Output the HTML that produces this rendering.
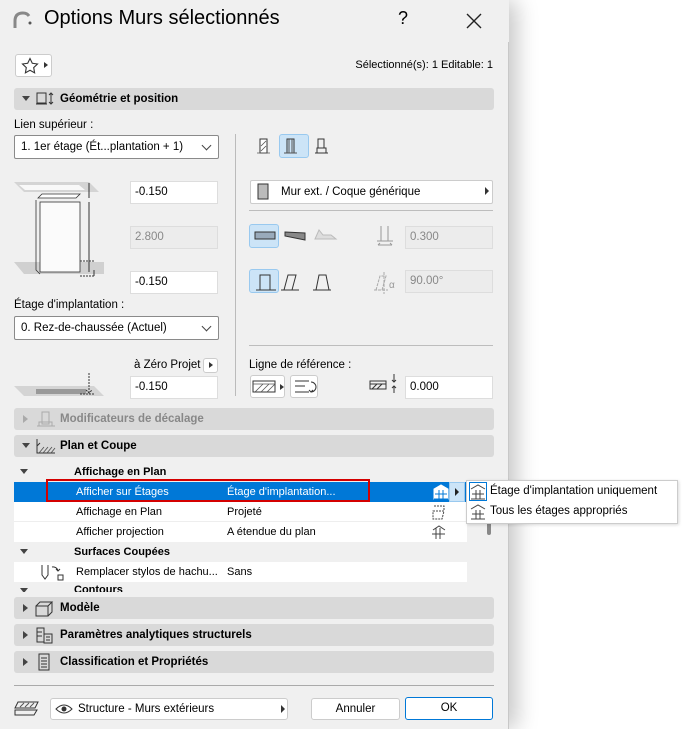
<!DOCTYPE html><html><head><meta charset="utf-8"><style>
*{box-sizing:border-box}body{margin:0;width:685px;height:729px;background:#fff;font-family:"Liberation Sans",sans-serif;font-size:11.5px;color:#000;position:relative;overflow:hidden}
.a{position:absolute}
.dlg{left:0;top:0;width:509px;height:729px;background:#f0f0f0;border-right:1px solid #c8c8c8;border-radius:0 8px 0 0;box-shadow:8px 0 22px rgba(0,0,0,.22)}
.title{left:0;top:0;width:509px;height:42px;background:#f0f0f0}
.hdr{left:14px;width:480px;height:22px;background:#d9d9d9;border-radius:3px;font-weight:bold;font-size:11.5px;line-height:22px}
.hdr .t{position:absolute;left:46px}
.tri{position:absolute;left:8px;top:8px;width:0;height:0;border-left:4px solid transparent;border-right:4px solid transparent;border-top:5px solid #444}
.trr{position:absolute;left:9px;top:7px;width:0;height:0;border-top:4px solid transparent;border-bottom:4px solid transparent;border-left:5px solid #444}
.inp{background:#fff;border:1px solid #ddd;height:23px;line-height:21px;padding-left:4px;font-size:11.5px}
.dis{background:#ececec;color:#888;border:1px solid #ddd}
.dd{background:#fff;border:1px solid #8a8a8a;height:24px;line-height:22px;padding-left:6px;border-radius:2px}
.chev{position:absolute;right:8px;top:6px;width:7px;height:7px;border-right:1.3px solid #444;border-bottom:1.3px solid #444;transform:rotate(45deg)}
.btn{background:#fff;border:1px solid #ccc;border-radius:3px}
.sel{background:#cce4f7;border:1px solid #99c9ef;border-radius:3px}
.row{left:14px;width:462px;height:20px;line-height:20px;font-size:11px}
.line{height:1px;background:#bdbdbd}
</style></head><body>
<div class="a dlg"></div>
<div class="a title"></div>
<svg class="a" style="left:12px;top:10px" width="20" height="20"><path d="M3 18 V11 Q3 3 11 3 Q15 3 17 6" fill="none" stroke="#888" stroke-width="3"/><circle cx="18" cy="13" r="1.5" fill="#555"/></svg>
<div class="a" style="left:44px;top:7px;font-size:20px">Options Murs sélectionnés</div>
<div class="a" style="left:398px;top:8px;font-size:18px">?</div>
<svg class="a" style="left:466px;top:13px" width="16" height="16"><path d="M1 1L15 15M15 1L1 15" stroke="#222" stroke-width="1.4"/></svg>
<div class="a btn" style="left:15px;top:54px;width:37px;height:23px"></div>
<svg class="a" style="left:21px;top:57px" width="18" height="17"><path d="M9 1.5l2.3 4.8 5.2.7-3.8 3.6.9 5.2L9 13.3 4.4 15.8l.9-5.2L1.5 7l5.2-.7z" fill="none" stroke="#333" stroke-width="1.1"/></svg>
<div class="a" style="left:44px;top:62px;border-top:3.5px solid transparent;border-bottom:3.5px solid transparent;border-left:4px solid #333"></div>
<div class="a" style="right:192px;top:59px;font-size:11px">Sélectionné(s): 1 Editable: 1</div>
<div class="a hdr" style="top:88px"><div class="tri"></div><svg class="a" style="left:21px;top:3px" width="20" height="16"><rect x="2" y="2" width="9" height="10" fill="none" stroke="#333"/><path d="M1 13h11M16 2v11M14 4l2-2 2 2M14 11l2 2 2-2" fill="none" stroke="#333"/></svg><span class="t">Géométrie et position</span></div>
<div class="a" style="left:14px;top:119px">Lien supérieur :</div>
<div class="a dd" style="left:14px;top:135px;width:205px">1. 1er étage (Ét...plantation + 1)<div class="chev"></div></div>
<div class="a" style="left:235px;top:134px;width:1px;height:262px;background:#bbb"></div>
<div class="a sel" style="left:279px;top:134px;width:30px;height:24px"></div>
<svg class="a" style="left:255px;top:137px;" width="80" height="20"><rect x="5" y="2" width="7" height="14" fill="#fff" stroke="#333"/><path d="M2 16h13M6 14l5-5M6 9l5-5" stroke="#555" stroke-width=".8"/><rect x="32" y="2" width="7" height="14" fill="none" stroke="#333"/><path d="M29 16h13M34 2v14M37 2v14" stroke="#555"/><rect x="63" y="2" width="6" height="9" fill="none" stroke="#333"/><path d="M60 16h13M62 16v-5h9v5" fill="none" stroke="#333"/></svg>
<svg class="a" style="left:14px;top:178px" width="90" height="120"><path d="M0 4h75l10 10H10z" fill="#d4d4d4"/><path d="M5 7h60l6 5H11z" fill="#f8f8f8"/><path d="M0 84h90l12 12H10z" fill="#d0d0d0"/><path d="M24 20l4-4h38l-4 4z" fill="#fff" stroke="#333" stroke-width=".8"/><rect x="26" y="24" width="40" height="70" fill="#fbfbfb" stroke="#333" stroke-width=".8"/><path d="M22 22v70l4 4" fill="none" stroke="#333" stroke-width=".8"/><path d="M75 5v15M75 24v70M80 92v6" stroke="#333"/><path d="M66 83h14M66 98h14" stroke="#333" stroke-dasharray="2 1"/></svg>
<div class="a inp" style="left:130px;top:181px;width:88px">-0.150</div>
<div class="a inp dis" style="left:130px;top:226px;width:88px">2.800</div>
<div class="a inp" style="left:130px;top:271px;width:88px">-0.150</div>
<div class="a dd" style="left:250px;top:180px;width:243px;border-color:#ccc;padding-left:30px">Mur ext. / Coque générique</div>
<svg class="a" style="left:257px;top:183px" width="12" height="17"><rect x="1" y="1" width="10" height="15" fill="#bbb" stroke="#333"/></svg>
<div class="a" style="left:485px;top:187px;border-top:4px solid transparent;border-bottom:4px solid transparent;border-left:4px solid #333"></div>
<div class="a line" style="left:249px;top:210px;width:244px"></div>
<div class="a sel" style="left:249px;top:224px;width:30px;height:24px"></div>
<svg class="a" style="left:252px;top:226px" width="90" height="20"><rect x="3" y="6" width="20" height="7" fill="#9ab" stroke="#333"/><path d="M33 6l20 1v7l-20-4z" fill="#888" stroke="#333"/><path d="M63 13h21l-5-4h-8l-4-5z" fill="#ddd" stroke="#bbb"/></svg>
<svg class="a" style="left:375px;top:225px" width="20" height="24"><path d="M6 1v15M13 1v15M2 16h16M3 20h14M3 20l2-2M17 20l-2-2" fill="none" stroke="#999"/></svg>
<div class="a inp dis" style="left:405px;top:226px;width:88px">0.300</div>
<div class="a sel" style="left:249px;top:269px;width:30px;height:24px"></div>
<svg class="a" style="left:252px;top:271px" width="90" height="20"><path d="M4 19h20M8 19V4h10v15M29 19h18M32 19l4-15h8l-4 15M61 19h18M64 19l3-15h7l3 15" fill="none" stroke="#333"/></svg>
<svg class="a" style="left:372px;top:270px" width="30" height="24"><path d="M4 20l4-14h6l-4 14zM12 2v22M2 20h14" fill="none" stroke="#aaa" stroke-dasharray="3 1"/><text x="17" y="18" font-size="10" fill="#999" font-family="Liberation Sans">α</text></svg>
<div class="a inp dis" style="left:405px;top:270px;width:88px">90.00°</div>
<div class="a" style="left:14px;top:299px">Étage d'implantation :</div>
<div class="a dd" style="left:14px;top:316px;width:205px">0. Rez-de-chaussée (Actuel)<div class="chev"></div></div>
<div class="a line" style="left:249px;top:345px;width:244px"></div>
<div class="a" style="left:134px;top:359px">à Zéro Projet</div>
<div class="a btn" style="left:203px;top:358px;width:15px;height:15px"></div>
<div class="a" style="left:209px;top:362px;border-top:3.5px solid transparent;border-bottom:3.5px solid transparent;border-left:4px solid #333"></div>
<svg class="a" style="left:14px;top:372px" width="90" height="28"><path d="M0 14h80l10 10H10z" fill="#d4d4d4"/><rect x="22" y="17" width="50" height="5" fill="#999"/><path d="M75 1v20M72 18l3 3 3-3M66 22h14" stroke="#333" fill="none" stroke-dasharray="2 1"/></svg>
<div class="a inp" style="left:130px;top:376px;width:88px">-0.150</div>
<div class="a" style="left:249px;top:359px">Ligne de référence :</div>
<div class="a btn" style="left:250px;top:375px;width:35px;height:23px"></div>
<svg class="a" style="left:252px;top:378px" width="70" height="18"><rect x="1" y="3" width="22" height="11" fill="#fff" stroke="#333"/><path d="M1 6h22M3 14l8-8M9 14l8-8M15 14l8-8" stroke="#555" stroke-width=".8"/><path d="M28 6l4 3-4 3z" fill="#333"/></svg>
<div class="a btn" style="left:290px;top:375px;width:28px;height:23px"></div>
<svg class="a" style="left:293px;top:378px" width="24" height="18"><path d="M2 3h14M2 14h14M2 8h10" stroke="#333"/><path d="M18 4a5 5 0 0 1 0 10M16 12l2 2 2-2" fill="none" stroke="#333"/></svg>
<svg class="a" style="left:368px;top:372px" width="34" height="24"><rect x="2" y="9" width="16" height="8" fill="none" stroke="#333"/><path d="M2 12h16M4 17l5-5M9 17l5-5M26 2v8M26 14v7M24 8l2 2 2-2M24 16l2-2 2 2" stroke="#333" fill="none"/></svg>
<div class="a inp" style="left:405px;top:376px;width:88px">0.000</div>
<div class="a hdr" style="top:408px;color:#888"><div class="trr" style="border-left-color:#aaa"></div><svg class="a" style="left:22px;top:3px" width="20" height="16"><rect x="6" y="1" width="7" height="12" fill="none" stroke="#aaa"/><path d="M1 15h18M3 15v-4h13v4" fill="none" stroke="#aaa"/></svg><span class="t">Modificateurs de décalage</span></div>
<div class="a hdr" style="top:435px"><div class="tri"></div><svg class="a" style="left:21px;top:3px" width="22" height="16"><path d="M2 1v14h18M2 8l3-3" fill="none" stroke="#333"/><path d="M4 15l5-6M8 15l5-6M12 15l5-6M16 15l4-5" stroke="#555" stroke-width=".9"/></svg><span class="t">Plan et Coupe</span></div>
<div class="a" style="left:14px;top:462px;width:462px;height:130px;background:#f0f0f0;overflow:hidden"></div>
<div class="a row" style="top:462px;font-weight:bold"><div class="tri" style="left:6px;top:7px"></div><span class="a" style="left:60px">Affichage en Plan</span></div>
<div class="a row" style="top:482px;background:#0078d7;color:#fff"><span class="a" style="left:62px">Afficher sur Étages</span><span class="a" style="left:213px">Étage d'implantation...</span></div>
<div class="a" style="left:46px;top:479px;width:324px;height:23px;border:2px solid #d40000"></div>
<svg class="a" style="left:433px;top:483px" width="16" height="18"><path d="M1 6l7-4 7 4v10H1z" fill="#fff" stroke="#fff"/><path d="M2 11h12M6 7v9M10 7v9M1 16h14" stroke="#0078d7"/></svg>
<div class="a" style="left:449px;top:482px;width:16px;height:20px;background:#cce4f7;border:1px solid #99c9ef"></div>
<div class="a" style="left:455px;top:488px;border-top:4px solid transparent;border-bottom:4px solid transparent;border-left:4px solid #222"></div>
<div class="a row" style="top:502px;background:#fff;width:453px;border-bottom:1px solid #eee"><span class="a" style="left:62px">Affichage en Plan</span><span class="a" style="left:213px">Projeté</span></div>
<div class="a row" style="top:522px;background:#fff;width:453px"><span class="a" style="left:62px">Afficher projection</span><span class="a" style="left:213px">A étendue du plan</span></div>
<svg class="a" style="left:431px;top:503px" width="16" height="38"><path d="M2 8h11l-2 8H2zM3 3h10v4" fill="none" stroke="#444" stroke-dasharray="2 1"/><path d="M1 31h13M5 25v11M9 25v11M2 27l6-4 6 4" fill="none" stroke="#444"/></svg>
<div class="a" style="left:487px;top:513px;width:4px;height:22px;background:#888;border-radius:2px"></div>
<div class="a row" style="top:542px;font-weight:bold"><div class="tri" style="left:6px;top:7px"></div><span class="a" style="left:60px">Surfaces Coupées</span></div>
<div class="a row" style="top:562px;background:#fff;width:453px"><svg class="a" style="left:24px;top:1px" width="28" height="18"><path d="M4 2v10l3 4 3-4V2M14 4a5 5 0 0 1 6 4M18 6l2 2 2-2" fill="none" stroke="#333"/><rect x="20" y="12" width="5" height="5" fill="none" stroke="#333"/></svg><span class="a" style="left:62px">Remplacer stylos de hachu...</span><span class="a" style="left:213px">Sans</span></div>
<div class="a" style="left:14px;top:582px;width:462px;height:10px;overflow:hidden;font-weight:bold;font-size:11px"><div class="tri" style="left:6px;top:6px"></div><span class="a" style="left:60px;top:2px">Contours</span></div>
<div class="a" style="left:466px;top:480px;width:212px;height:44px;background:#fff;border:1px solid #ccc;box-shadow:1px 1px 3px rgba(0,0,0,.15)"></div>
<div class="a" style="left:469px;top:482px;width:18px;height:19px;border:1px solid #0078d7"></div>
<svg class="a" style="left:470px;top:483px" width="16" height="40"><path d="M1 6l7-4 7 4M2 11h12M6 7v9M10 7v9M1 16h14M1 26l7-4 7 4M2 31h12M6 27v9M10 27v9M1 36h14" fill="none" stroke="#444"/></svg>
<div class="a" style="left:490px;top:485px;font-size:11.5px">Étage d'implantation uniquement</div>
<div class="a" style="left:490px;top:505px;font-size:11.5px">Tous les étages appropriés</div>
<div class="a hdr" style="top:597px"><div class="trr"></div><svg class="a" style="left:20px;top:2px" width="20" height="18"><path d="M2 7h12v10H2zM2 7l4-4h12l-4 4M14 17l4-4V3" fill="none" stroke="#333"/></svg><span class="t">Modèle</span></div>
<div class="a hdr" style="top:624px"><div class="trr"></div><svg class="a" style="left:21px;top:2px" width="20" height="18"><path d="M2 2h7v14H2zM2 6h5M2 10h5" fill="none" stroke="#333"/><rect x="9" y="8" width="8" height="9" fill="#d9d9d9" stroke="#333"/><path d="M11 11h4M11 14h4" stroke="#333"/></svg><span class="t">Paramètres analytiques structurels</span></div>
<div class="a hdr" style="top:651px"><div class="trr"></div><svg class="a" style="left:23px;top:2px" width="16" height="18"><rect x="2" y="1" width="10" height="16" fill="none" stroke="#333"/><path d="M4 5h6M4 8h6M4 11h6M4 14h6" stroke="#333"/></svg><span class="t">Classification et Propriétés</span></div>
<div class="a line" style="left:14px;top:685px;width:480px;background:#aaa"></div>
<svg class="a" style="left:14px;top:698px" width="30" height="20"><path d="M4 4h20l-3 6H1zM1 12h22l-3 5H1z" fill="none" stroke="#333"/><path d="M6 9l4-4M11 9l4-4M16 9l4-4" stroke="#555"/></svg>
<div class="a btn" style="left:50px;top:698px;width:238px;height:22px;line-height:20px;padding-left:27px">Structure - Murs extérieurs</div>
<svg class="a" style="left:55px;top:703px" width="18" height="12"><path d="M1 6Q9-2 17 6Q9 14 1 6z" fill="none" stroke="#333"/><circle cx="9" cy="6" r="2.5" fill="#333"/></svg>
<div class="a" style="left:281px;top:705px;border-top:4px solid transparent;border-bottom:4px solid transparent;border-left:4px solid #333"></div>
<div class="a btn" style="left:311px;top:698px;width:89px;height:22px;line-height:20px;text-align:center">Annuler</div>
<div class="a btn" style="left:405px;top:697px;width:88px;height:23px;line-height:20px;text-align:center;border:1.5px solid #0078d7">OK</div>
</body></html>
